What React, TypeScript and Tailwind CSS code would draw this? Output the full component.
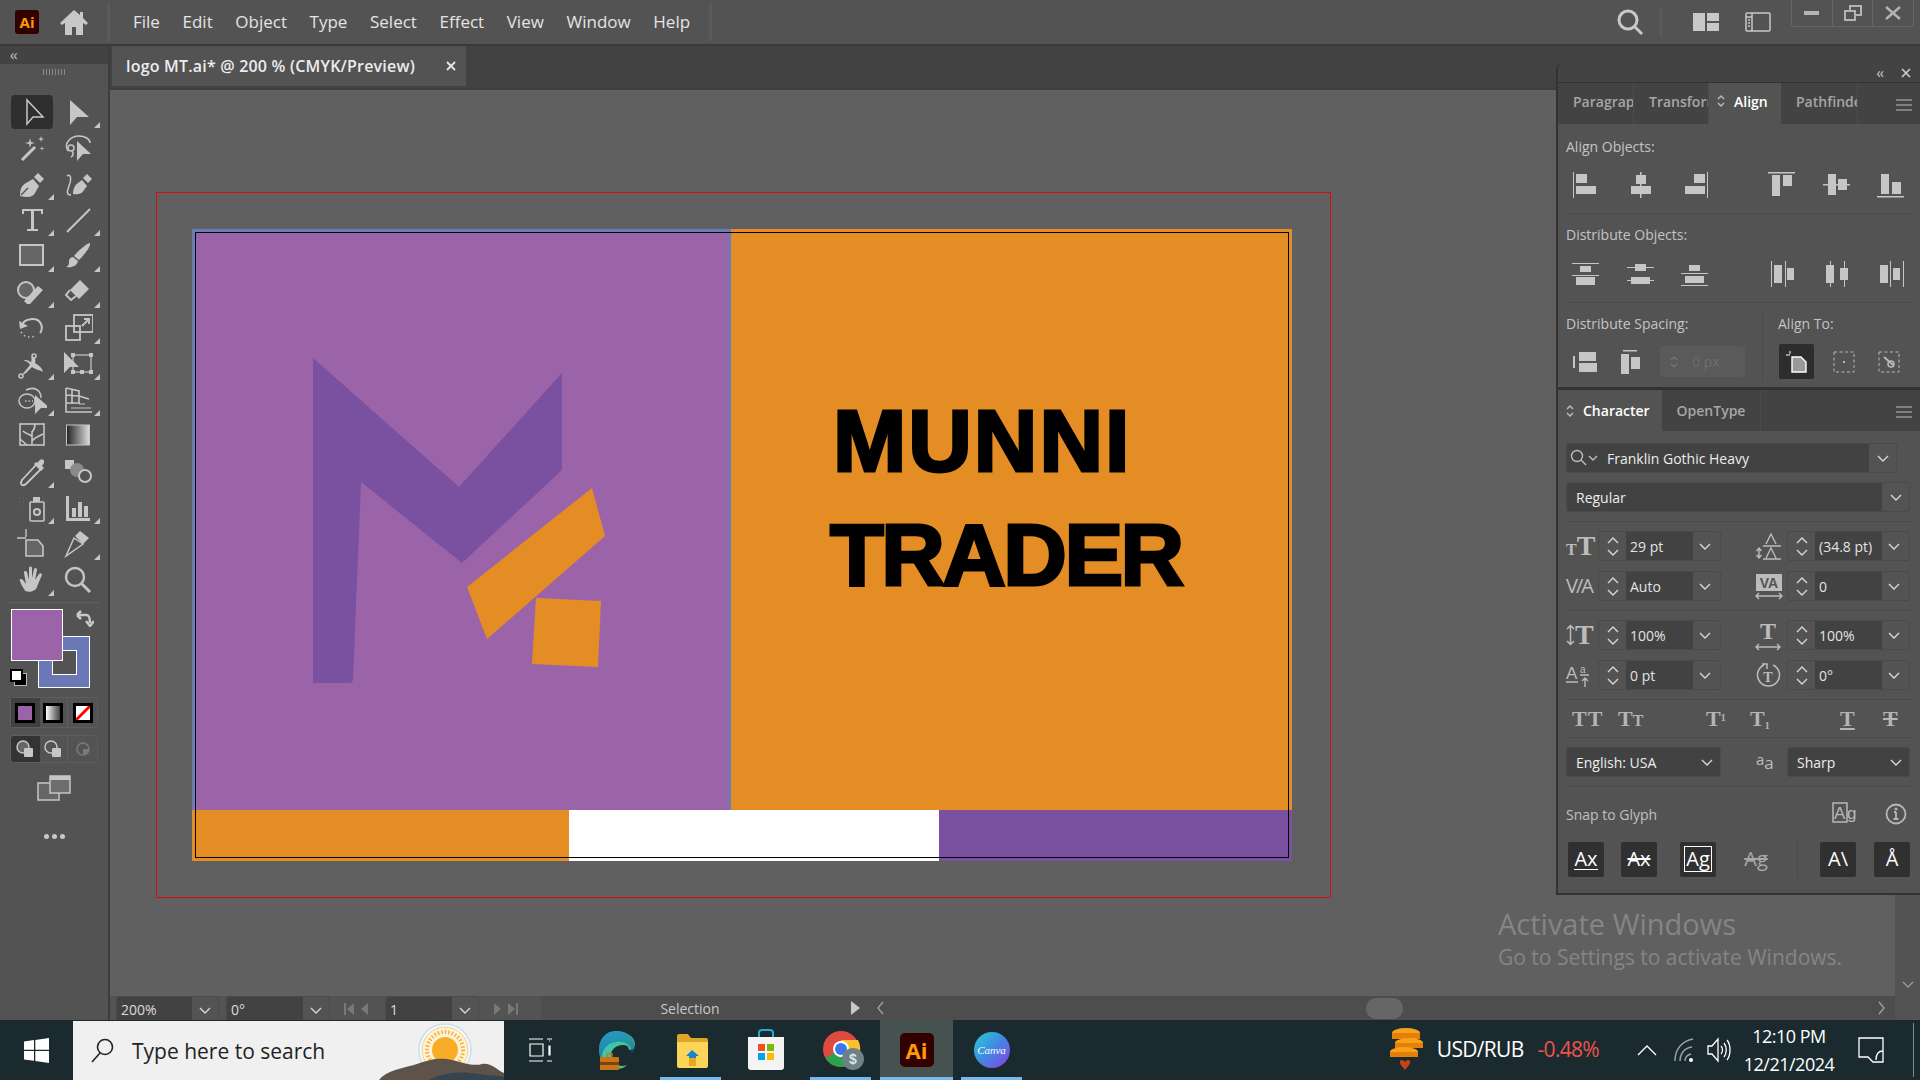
import React from 'react';

const C = '#c6c6c6';

const Ico = ({ s = 30, children, fill = 'none', sw = 1.5, className = '' }: { s?: number; children: React.ReactNode; fill?: string; sw?: number; className?: string }) => (
  <svg width={s} height={s} viewBox={`0 0 ${s} ${s}`} fill={fill} stroke={fill === 'none' ? C : 'none'} strokeWidth={sw} className={className}>
    {children}
  </svg>
);

const R = ({ x, y, w, h }: { x: number; y: number; w: number; h: number }) => <rect x={x} y={y} width={w} height={h} fill={C} stroke="none" />;

const Chev = ({ up = false, c = '#d8d8d8' }: { up?: boolean; c?: string }) => (
  <svg width="12" height="7" viewBox="0 0 12 7" fill="none" stroke={c} strokeWidth="1.4">
    <path d={up ? 'M1 6l5-5 5 5' : 'M1 1l5 5 5-5'} />
  </svg>
);

const UpDown = ({ c = '#b8b8b8' }: { c?: string }) => (
  <svg width="8" height="14" viewBox="0 0 8 14" fill="none" stroke={c} strokeWidth="1.5">
    <path d="M1 5l3-3 3 3M1 9l3 3 3-3" />
  </svg>
);

const Burger = () => (
  <svg width="16" height="12" viewBox="0 0 16 12" stroke="#bdbdbd" strokeWidth="1.2">
    <path d="M0 1h16M0 6h16M0 11h16" />
  </svg>
);

const tools: { icon: React.ReactNode; fly?: boolean; active?: boolean }[] = [
  { active: true, icon: <Ico><path d="M10 3v24l6-7h10z" /></Ico> },
  { fly: true, icon: <Ico fill={C}><path d="M7 3v25l7-8h12z" /></Ico> },
  { icon: <Ico><path d="M5 27L18 14" strokeWidth="3" /><path d="M13 5l1 4 4 1-4 1-1 4-1-4-4-1 4-1zM24 3l.7 2.3 2.3.7-2.3.7-.7 2.3-.7-2.3-2.3-.7 2.3-.7zM25 13l.5 2 2 .5-2 .5-.5 2-.5-2-2-.5 2-.5z" fill={C} stroke="none" /></Ico> },
  { icon: <Ico><path d="M5 18C0 10 8 3 16 3c6 0 11 3 11 7" /><circle cx="8" cy="15" r="3" /><path d="M9 18c2 3 1 5-1 6" /><path d="M14 8v20l6-7h8z" fill={C} stroke="none" /></Ico> },
  { fly: true, icon: <Ico><path d="M3 26c0-6 2-10 6-12l7-4 6 7-4 7c-2 4-7 5-15 3z" fill={C} stroke="none" /><path d="M17 8l4-4 6 6-4 4z" fill={C} stroke="none" /><path d="M4 26l7-7" stroke="#535353" /></Ico> },
  { icon: <Ico><path d="M4 7c5-3 4 5 2 10s-3 9 2 9" /><path d="M10 25c0-5 2-9 5-11l4-3 5 6-3 4c-2 4-6 5-11 4z" fill={C} stroke="none" /><path d="M20 9l4-4 5 5-4 4z" fill={C} stroke="none" /></Ico> },
  { fly: true, icon: <Ico fill={C}><path d="M5 4h21v5h-2V6H17v18h4v2H10v-2h4V6H7v3H5z" /></Ico> },
  { fly: true, icon: <Ico><path d="M4 27L27 4" strokeWidth="2" /></Ico> },
  { fly: true, icon: <Ico sw={2}><rect x="3" y="4" width="23" height="20" fill="#666" /></Ico> },
  { fly: true, icon: <Ico fill={C}><path d="M27 2c1 4-6 12-11 17l-5-4C16 9 23 3 27 2zM10 16l5 4c-1 5-6 7-12 6 3-1 3-4 3-6s2-4 4-4z" /></Ico> },
  { fly: true, icon: <Ico><circle cx="9" cy="13" r="8" fill="#666" strokeWidth="2" /><path d="M10 27l-3-3 14-15 5 4-13 14z" fill={C} stroke="none" /></Ico> },
  { fly: true, icon: <Ico><path d="M17 3l9 9-10 10-9-9z" fill={C} stroke="none" /><path d="M7 13l-4 5 5 5 5-4" strokeWidth="2" /></Ico> },
  { icon: <Ico><path d="M5 12C7 6 20 3 24 11c2 4 0 8-1 9" strokeWidth="2" /><path d="M2 8l1 8 8-3z" fill={C} stroke="none" /><path d="M4 19l2 3 4 2h4l5-1" strokeDasharray="1.5 3" /></Ico> },
  { fly: true, icon: <Ico sw={1.8}><rect x="11" y="2" width="19" height="17" /><rect x="3" y="13" width="14" height="14" /><path d="M19 13l6-6M21 6h5v5" /></Ico> },
  { fly: true, icon: <Ico><path d="M4 27l5-3 6-6c4 3 8 3 11 5-1-5-5-7-8-9 1-3 0-6-3-7-1 2 0 4-1 6-3-2-6-3-7-1 3 0 5 2 6 4z" fill={C} stroke="none" /><circle cx="4" cy="27" r="2" /><circle cx="17" cy="7" r="2" /></Ico> },
  { fly: true, icon: <Ico><path d="M1 3v21l6-6h9z" fill={C} stroke="none" /><rect x="10" y="6" width="18" height="17" strokeWidth="1.2" /><R x={8} y={4} w={4} h={4} /><R x={26} y={4} w={4} h={4} /><R x={26} y={21} w={4} h={4} /><R x={17} y={21} w={4} h={4} /><R x={8} y={21} w={4} h={4} /></Ico> },
  { fly: true, icon: <Ico><ellipse cx="10" cy="16" rx="8" ry="7" /><path d="M9 5c8-4 15 0 15 8" /><path d="M8 16h8" strokeDasharray="1.5 2" /><path d="M18 10v19l6-6h9z" fill={C} stroke="none" /></Ico> },
  { fly: true, icon: <Ico sw={1.2}><path d="M3 3v24h26M3 3l13 3v13M3 10l13 1 10 3M3 18h13M9 5v14" strokeWidth="1.6" /><path d="M16 19h6M16 23h12M8 23h8" /></Ico> },
  { icon: <Ico sw={1.6}><rect x="3" y="3" width="24" height="21" /><path d="M15 24V10M15 15c-3-2-6-2-9-5M15 20c3-4 6-4 11-7M15 11c2-2 3-4 3-8M3 18l7 6" /></Ico> },
  { icon: (
    <svg width="30" height="30" viewBox="0 0 30 30">
      <defs>
        <linearGradient id="gt" x1="0" x2="1">
          <stop offset="0" stopColor="#222" />
          <stop offset="1" stopColor="#ddd" />
        </linearGradient>
      </defs>
      <rect x="3.5" y="4" width="23" height="20" fill="url(#gt)" stroke={C} />
    </svg>
  ) },
  { fly: true, icon: <Ico><path d="M19 8l-14 15c-1 2-2 4 0 5s3 0 5-2L24 12" strokeWidth="1.8" /><path d="M17 7l7 7 3-3-2-2 2-3c1-3-2-5-4-3l-3 3-1-1z" fill={C} stroke="none" /></Ico> },
  { icon: <Ico sw={2}><rect x="2" y="3" width="9" height="9" fill={C} stroke="none" /><circle cx="14" cy="13" r="7" fill="#8a8a8a" stroke="none" /><circle cx="22" cy="19" r="6" fill="#535353" /></Ico> },
  { fly: true, icon: <Ico><path d="M2 5h.1M6 5h.1M10 5h.1M2 9h.1M6 9h.1M2 13h.1" strokeWidth="2" /><rect x="13" y="9" width="14" height="19" rx="1" strokeWidth="1.6" /><circle cx="20" cy="19" r="3" strokeWidth="2" /><R x={16} y={4} w={7} h={5} /></Ico> },
  { fly: true, icon: <Ico fill={C}><path d="M3 3h3v22h21v3H3z" /><path d="M9 15h4v9H9zM15 9h4v15h-4zM21 13h4v11h-4z" /></Ico> },
  { icon: <Ico><path d="M0 9h9M9 0v8" strokeWidth="1.4" /><path d="M9 11h12l5 6v10H9z" fill="#666" strokeWidth="1.6" /></Ico> },
  { fly: true, icon: <Ico><path d="M3 27l8-18 9 6z" strokeWidth="1.5" /><path d="M12 7l5-5 9 7-6 6z" fill={C} stroke="none" /></Ico> },
  { fly: true, icon: <Ico fill={C}><path d="M9 27c-2-3-5-7-6-11-1-2 1-3 3-1l3 4-2-11c-1-2 2-3 3-1l2 8V3c0-2 3-2 3 0v10l2-9c1-2 3-1 3 1l-2 10 4-6c2-2 3 0 3 1-2 4-4 9-5 12-1 4-8 6-11 4z" /></Ico> },
  { icon: <Ico sw={2.4}><circle cx="12" cy="12" r="9" /><path d="M19 19l8 8" strokeWidth="3" /></Ico> },
];

const menus = ['File', 'Edit', 'Object', 'Type', 'Select', 'Effect', 'View', 'Window', 'Help'];

const MenuBar = () => (
  <div className="flex h-[46px] items-center border-b-2 border-[#3a3a3a] bg-[#535353]">
    <div className="ml-[15px] flex h-[24px] w-[24px] items-center justify-center rounded-[3px] bg-[#330000] text-[15px] font-bold text-[#ff9a00]">Ai</div>
    <svg className="ml-[20px]" width="30" height="28" viewBox="0 0 30 28" fill="#c8c8c8">
      <path d="M15 2L1 15l2 2 3-2v12h7v-8h4v8h7V15l3 2 2-2-5-5V4h-3v3z" />
    </svg>
    <div className="ml-[18px] h-[38px] w-[3px] bg-[#5b5b5b]" />
    <div className="ml-[23px] flex gap-[22.6px] text-[17px] text-[#e4e4e4]">
      {menus.map((m) => (
        <span key={m}>{m}</span>
      ))}
    </div>
    <div className="ml-[19px] h-[38px] w-[3px] bg-[#5b5b5b]" />
    <div className="flex-1" />
    <svg width="28" height="28" viewBox="0 0 28 28" fill="none" stroke="#c8c8c8" strokeWidth="3">
      <circle cx="12" cy="12" r="9" />
      <path d="M18 18l8 8" />
    </svg>
    <div className="ml-[16px] h-[30px] w-[2px] bg-[#5b5b5b]" />
    <svg className="ml-[31px]" width="26" height="18" viewBox="0 0 26 18" fill="#c8c8c8">
      <path d="M0 0h12v18H0zM14 0h12v8H14zM14 10h12v8H14z" />
    </svg>
    <svg className="ml-[26px]" width="26" height="20" viewBox="0 0 26 20" fill="none" stroke="#c8c8c8" strokeWidth="1.5">
      <rect x="1" y="1" width="24" height="18" rx="1" />
      <path d="M7 1v18M1 5h6" />
      <path d="M3 8h2M3 11h2M3 14h2" />
    </svg>
    <div className="mb-[18px] ml-[20px] mr-[6px] flex h-[27px] w-[123px] items-center rounded-b-[3px] border border-t-0 border-[#666]">
      <div className="flex h-full flex-1 items-center justify-center border-r border-[#666]">
        <div className="h-[4px] w-[15px] bg-[#b4b4b4]" />
      </div>
      <div className="flex h-full flex-1 items-center justify-center border-r border-[#666]">
        <svg width="18" height="16" viewBox="0 0 18 16" fill="none" stroke="#b4b4b4" strokeWidth="2">
          <rect x="1" y="6" width="10" height="9" />
          <path d="M6 5V1h11v9h-5" />
        </svg>
      </div>
      <div className="flex h-full flex-1 items-center justify-center">
        <svg width="16" height="14" viewBox="0 0 16 14" fill="none" stroke="#b4b4b4" strokeWidth="2.4">
          <path d="M1 1l14 12M15 1L1 13" />
        </svg>
      </div>
    </div>
  </div>
);

const Toolbar = () => (
  <div className="flex w-[110px] shrink-0 flex-col border-r-2 border-[#3d3d3d] bg-[#535353]">
    <div className="flex h-[18px] items-center bg-[#434343] pl-[10px] text-[14px] leading-none tracking-[-1px] text-[#c8c8c8]">‹‹</div>
    <div className="flex h-[30px] justify-center pt-[5px]">
      <div className="h-[6px] w-[22px] bg-[repeating-linear-gradient(90deg,#8a8a8a_0_1px,transparent_1px_3px)]" />
    </div>
    <div className="grid grid-cols-[46px_46px] pl-[9px]">
      {tools.map((t, i) => (
        <div key={i} className="relative flex h-[36px] items-center justify-center">
          {t.active && <div className="absolute inset-x-[2px] inset-y-[1px] rounded-[4px] bg-[#2f2f2f]" />}
          <div className="relative flex">{t.icon}</div>
          {t.fly && <div className="absolute bottom-[2px] right-[1px] h-0 w-0 border-b-[6px] border-l-[6px] border-b-[#c6c6c6] border-l-transparent" />}
        </div>
      ))}
    </div>
    <div className="mx-[9px] mt-[4px] h-px bg-[#616161]" />
    <div className="relative h-[94px] shrink-0">
      <div className="absolute left-[38px] top-[33px] flex h-[52px] w-[52px] items-center justify-center border border-white bg-[#6a78b5]">
        <div className="h-[25px] w-[25px] border border-white bg-[#535353]" />
      </div>
      <div className="absolute left-[11px] top-[6px] h-[52px] w-[52px] border border-white bg-[#9b63a8]" />
      <svg className="absolute left-[76px] top-[6px]" width="18" height="18" viewBox="0 0 18 18" fill="none" stroke="#c8c8c8" strokeWidth="2.5">
        <path d="M2 6h8c3 0 4 2 4 8M1 6l4-4M1 6l4 4M10 12l4 5 4-5" />
      </svg>
      <div className="absolute left-[14px] top-[70px] h-[13px] w-[13px] border border-[#bbb] bg-black" />
      <div className="absolute left-[10px] top-[66px] h-[13px] w-[13px] border-2 border-black bg-white" />
    </div>
    <div className="mx-[10px] grid h-[31px] grid-cols-3 rounded-[3px] border border-[#5e5e5e]">
      <div className="flex items-center justify-center bg-[#404040]">
        <div className="h-[20px] w-[20px] border-[3px] border-black bg-[#9b63a8]" />
      </div>
      <div className="flex items-center justify-center border-r border-[#5e5e5e]">
        <div className="h-[20px] w-[20px] border-[3px] border-black bg-gradient-to-r from-white to-[#444]" />
      </div>
      <div className="flex items-center justify-center">
        <svg width="20" height="20" viewBox="0 0 20 20">
          <rect width="20" height="20" fill="#000" />
          <rect x="3" y="3" width="14" height="14" fill="#fff" />
          <path d="M3 15L15 3h2v2L5 17H3z" fill="#f00" />
        </svg>
      </div>
    </div>
    <div className="mx-[10px] mt-[7px] grid h-[28px] grid-cols-3 rounded-[3px] border border-[#5e5e5e]">
      <div className="flex items-center justify-center rounded-l-[3px] bg-[#333]">
        <svg width="18" height="18" viewBox="0 0 18 18">
          <circle cx="7" cy="7" r="6" fill="#666" stroke={C} strokeWidth="1.5" />
          <rect x="8" y="8" width="9" height="9" rx="1" fill={C} />
        </svg>
      </div>
      <div className="flex items-center justify-center border-r border-[#5e5e5e]">
        <svg width="18" height="18" viewBox="0 0 18 18">
          <circle cx="7" cy="7" r="6" fill="#535353" stroke={C} strokeWidth="1.5" />
          <rect x="8" y="8" width="9" height="9" rx="1" fill={C} />
        </svg>
      </div>
      <div className="flex items-center justify-center">
        <svg width="14" height="14" viewBox="0 0 14 14">
          <circle cx="7" cy="7" r="6" fill="none" stroke="#7a7a7a" strokeWidth="1.5" />
          <path d="M7 7h6a6 6 0 0 1-6 6z" fill="#7a7a7a" />
        </svg>
      </div>
    </div>
    <div className="flex justify-center pt-[12px]">
      <svg width="34" height="26" viewBox="0 0 34 26">
        <rect x="1" y="8" width="21" height="17" fill="#666" stroke={C} strokeWidth="1.5" />
        <rect x="13" y="1" width="20" height="17" fill="#6e6e6e" stroke={C} strokeWidth="1.5" />
        <rect x="13" y="1" width="20" height="4" fill={C} />
      </svg>
    </div>
    <div className="flex justify-center gap-[3px] pt-[33px]">
      <div className="h-[5px] w-[5px] rounded-full bg-[#c8c8c8]" />
      <div className="h-[5px] w-[5px] rounded-full bg-[#c8c8c8]" />
      <div className="h-[5px] w-[5px] rounded-full bg-[#c8c8c8]" />
    </div>
  </div>
);

const Artboard = () => (
  <div className="ml-[46px] mt-[102px] h-[706px] w-[1175px] shrink-0 border border-[#d40f0f] pl-[35px] pt-[36px]">
    <div className="relative flex h-[632px] w-[1100px] flex-col">
      <div className="flex h-[581px]">
        <div className="h-full w-[539px] border-x-[3px] border-t-[3px] border-[#6c7ab6] bg-[#9b63a8]">
          <svg width="533" height="578" viewBox="195 232 533 578" fill="none">
            <path d="M313 358L459 487L562 373V470L462 563L361 482L353 679Q353 683 349 683H313Z" fill="#7a50a0" />
            <path d="M592 488L605 536L487 639L467 587Z" fill="#e58d25" />
            <path d="M536 598L601 601L598 667L532 664Z" fill="#e58d25" />
          </svg>
        </div>
        <div className="flex flex-1 flex-col gap-[24px] bg-[#e58d25] pl-[102px] pt-[167px] font-['Liberation_Sans',sans-serif] text-[88px] font-bold leading-[90px] text-black [-webkit-text-stroke:3px_black]">
          <div className="tracking-[2px]">MUNNI</div>
          <div className="-ml-[3px] tracking-[-2.5px]">TRADER</div>
        </div>
      </div>
      <div className="flex h-[51px]">
        <div className="w-[377px] bg-[#e58d25]" />
        <div className="w-[370px] bg-white" />
        <div className="flex-1 bg-[#7a50a0]" />
      </div>
      <div className="pointer-events-none absolute inset-x-[3px] bottom-[3px] top-[3px] border border-black" />
    </div>
  </div>
);

const Label = ({ children }: { children: React.ReactNode }) => <div className="h-[20px] text-[14px] leading-[20px] text-[#c4c4c4]">{children}</div>;
const Sep = ({ className = '' }: { className?: string }) => <div className={`mx-[8px] h-px bg-[#4a4a4a] ${className}`} />;

const Ic = ({ children }: { children: React.ReactNode }) => (
  <svg width="28" height="28" viewBox="0 0 28 28" className="shrink-0">
    {children}
  </svg>
);

const alignObjects = [
  <Ic key="1"><R x={1} y={1} w={1} h={26} /><R x={4} y={3} w={11} h={9} /><R x={4} y={15} w={20} h={8} /></Ic>,
  <Ic key="2"><R x={13} y={1} w={1.5} h={26} /><R x={9} y={4} w={10} h={9} /><R x={4} y={15} w={20} h={8} /></Ic>,
  <Ic key="3"><R x={26} y={1} w={1} h={26} /><R x={13} y={3} w={11} h={9} /><R x={4} y={15} w={20} h={8} /></Ic>,
  <Ic key="4"><R x={0} y={1} w={27} h={1.5} /><R x={4} y={4} w={8} h={21} /><R x={15} y={4} w={9} h={11} /></Ic>,
  <Ic key="5"><R x={0} y={13} w={27} h={1.5} /><R x={5} y={3} w={8} h={21} /><R x={15} y={8} w={9} h={11} /></Ic>,
  <Ic key="6"><R x={0} y={25} w={27} h={1.5} /><R x={4} y={3} w={8} h={20} /><R x={15} y={11} w={9} h={12} /></Ic>,
];
const distObjects = [
  <Ic key="1"><R x={0} y={3} w={27} h={1} /><R x={0} y={15} w={27} h={1} /><R x={8} y={6} w={11} h={6} /><R x={4} y={17} w={19} h={8} /></Ic>,
  <Ic key="2"><R x={0} y={7} w={27} h={1} /><R x={0} y={20} w={27} h={1} /><R x={8} y={4} w={11} h={7} /><R x={4} y={17} w={19} h={7} /></Ic>,
  <Ic key="3"><R x={0} y={13} w={27} h={1} /><R x={0} y={25} w={27} h={1} /><R x={8} y={5} w={11} h={6} /><R x={4} y={16} w={19} h={7} /></Ic>,
  <Ic key="4"><R x={3} y={1} w={1} h={26} /><R x={17} y={1} w={1} h={26} /><R x={6} y={5} w={8} h={18} /><R x={19} y={8} w={7} h={12} /></Ic>,
  <Ic key="5"><R x={7} y={1} w={1} h={26} /><R x={21} y={1} w={1} h={26} /><R x={3} y={5} w={8} h={18} /><R x={17} y={8} w={8} h={12} /></Ic>,
  <Ic key="6"><R x={13} y={1} w={1} h={26} /><R x={26} y={1} w={1} h={26} /><R x={3} y={5} w={8} h={18} /><R x={16} y={8} w={7} h={12} /></Ic>,
];

const PanelTab = ({ label, active, w, arrows }: { label: string; active?: boolean; w: string; arrows?: boolean }) => (
  <div className={`flex h-full items-center overflow-hidden whitespace-nowrap pb-[5px] text-[14px] font-semibold ${w} ${active ? 'bg-[#535353] text-white' : 'border-r border-[#4c4c4c] text-[#a6a6a6]'}`}>
    {arrows && <span className="ml-[8px] mr-[9px] flex shrink-0"><UpDown /></span>}
    {!arrows && <span className="ml-[15px]" />}
    {label}
  </div>
);

const Spin = ({ value }: { value: string }) => (
  <div className="flex h-[30px] w-[123px] shrink-0 rounded-[3px] border border-[#4a4a4a]">
    <div className="flex w-[27px] flex-col items-center justify-center gap-[5px]">
      <Chev up />
      <Chev />
    </div>
    <div className="flex flex-1 items-center whitespace-nowrap bg-[#424242] pl-[4px] text-[14px] text-[#e2e2e2]">{value}</div>
    <div className="flex w-[27px] items-center justify-center pr-[3px]">
      <Chev />
    </div>
  </div>
);

const SerifT = ({ size, className = '' }: { size: number; className?: string }) => (
  <span className={`font-['Liberation_Serif',serif] font-bold leading-none text-[#bcbcbc] ${className}`} style={{ fontSize: size }}>T</span>
);

const CharRow = ({ a, av, b, bv }: { a: React.ReactNode; av: string; b: React.ReactNode; bv: string }) => (
  <div className="flex h-[30px] items-center pl-[8px]">
    <div className="flex h-[30px] w-[32px] items-center justify-start">{a}</div>
    <Spin value={av} />
    <div className="ml-[34px] flex h-[30px] w-[32px] items-center justify-start">{b}</div>
    <Spin value={bv} />
  </div>
);

const DarkBtn = ({ children }: { children: React.ReactNode }) => (
  <div className="flex h-[35px] w-[36px] shrink-0 items-center justify-center rounded-[2px] bg-[#303030] text-[20px] leading-none text-white">{children}</div>
);

const Panels = () => (
  <div className="absolute right-0 top-[18px] flex h-[831px] w-[362px] flex-col rounded-tl-[6px] border-b-2 border-[#333] bg-[#535353] font-['Open_Sans',sans-serif] shadow-[-2px_0_0_#333]">
    <div className="flex h-[19px] shrink-0 items-center justify-end gap-[18px] rounded-tl-[6px] border-b border-[#333] bg-[#434343] pr-[9px] text-[#d0d0d0]">
      <span className="text-[14px] leading-none tracking-[-1px]">‹‹</span>
      <svg width="10" height="10" viewBox="0 0 10 10" stroke="#d0d0d0" strokeWidth="1.6"><path d="M1 1l8 8M9 1L1 9" /></svg>
    </div>
    <div className="flex h-[41px] shrink-0 items-center bg-[#434343]">
      <PanelTab label="Paragrap" w="w-[76px]" />
      <PanelTab label="Transform" w="w-[75px]" />
      <PanelTab label="Align" w="w-[72px]" active arrows />
      <PanelTab label="Pathfinder" w="w-[77px]" />
      <div className="ml-auto mr-[8px] pt-[2px]"><Burger /></div>
    </div>
    <div className="h-[266px] shrink-0 border-b-[3px] border-[#333]">
      <div className="pl-[8px] pt-[13px]"><Label>Align Objects:</Label></div>
      <div className="mt-[14px] flex pl-[14px]">
        <div className="flex gap-[26.5px]">{alignObjects.slice(0, 3)}</div>
        <div className="ml-[59px] flex gap-[26.5px]">{alignObjects.slice(3)}</div>
      </div>
      <Sep className="mt-[14px]" />
      <div className="pl-[8px] pt-[11px]"><Label>Distribute Objects:</Label></div>
      <div className="mt-[15px] flex pl-[14px]">
        <div className="flex gap-[26.5px]">{distObjects.slice(0, 3)}</div>
        <div className="ml-[59px] flex gap-[26.5px]">{distObjects.slice(3)}</div>
      </div>
      <Sep className="mt-[14px]" />
      <div className="flex">
        <div className="w-[204px] pl-[8px] pt-[11px]">
          <Label>Distribute Spacing:</Label>
          <div className="mt-[12px] flex items-center pl-[6px]">
            <Ic><R x={1} y={8} w={2} h={12} /><R x={7} y={4} w={17} h={9} /><R x={7} y={15} w={18} h={9} /></Ic>
            <div className="ml-[18px]"><Ic><R x={5} y={2} w={14} h={1.5} /><R x={3} y={6} w={8} h={20} /><R x={13} y={9} w={9} h={12} /></Ic></div>
            <div className="ml-[14px] flex h-[31px] w-[85px] items-center rounded-[3px] bg-[#5a5a5a] text-[14px] text-[#6f6f6f]">
              <div className="flex w-[28px] justify-center"><UpDown c="#727272" /></div>
              <span className="pl-[4px]">0 px</span>
            </div>
          </div>
        </div>
        <div className="mt-[8px] h-[70px] w-px bg-[#4a4a4a]" />
        <div className="pl-[15px] pt-[11px]">
          <Label>Align To:</Label>
          <div className="mt-[10px] flex items-center pl-[1px]">
            <div className="flex h-[35px] w-[35px] items-center justify-center rounded-[2px] bg-[#2d2d2d]">
              <svg width="22" height="22" viewBox="0 0 22 22" fill="none">
                <path d="M0 4h4M4 0v3" stroke="#fff" />
                <path d="M6 6h9l5 5v10H6z" fill="#9a9a9a" stroke="#fff" strokeWidth="1.4" />
              </svg>
            </div>
            <svg width="22" height="22" viewBox="0 0 22 22" stroke="#b8b8b8" strokeDasharray="3 2.5" fill="none" className="ml-[19px]"><rect x="1" y="1" width="20" height="20" /><path d="M10 11h2" strokeDasharray="0" strokeWidth="2" /></svg>
            <svg width="22" height="22" viewBox="0 0 22 22" stroke="#b8b8b8" strokeDasharray="3 2.5" fill="none" className="ml-[23px]"><rect x="1" y="1" width="20" height="20" /><path d="M6 6l9 8" strokeDasharray="0" strokeWidth="2" /><circle cx="13" cy="13" r="3" strokeDasharray="0" strokeWidth="1.5" /></svg>
          </div>
        </div>
      </div>
    </div>
    <div className="flex h-[41px] shrink-0 items-center bg-[#434343]">
      <div className="flex h-full w-[104px] items-center bg-[#535353] pl-[8px] text-[14px] font-semibold text-white">
        <span className="mr-[9px] flex"><UpDown /></span>Character
      </div>
      <div className="flex h-full w-[99px] items-center justify-center border-r border-[#4c4c4c] text-[14px] font-semibold text-[#a6a6a6]">OpenType</div>
      <div className="ml-auto mr-[8px] pt-[2px]"><Burger /></div>
    </div>
    <div className="ml-[8px] mt-[12px] flex h-[30px] w-[331px] shrink-0 items-center rounded-[3px] border border-[#4a4a4a] bg-[#424242] text-[14px] text-[#ececec]">
      <svg className="ml-[3px]" width="28" height="18" viewBox="0 0 28 18" fill="none" stroke="#bdbdbd" strokeWidth="1.4">
        <circle cx="7" cy="7" r="5.5" />
        <path d="M11 11l5 5M19 7l4 4 4-4" />
      </svg>
      <span className="ml-[9px]">Franklin Gothic Heavy</span>
      <div className="ml-auto flex h-full w-[27px] items-center justify-center bg-[#535353]"><Chev /></div>
    </div>
    <div className="ml-[8px] mt-[9px] flex h-[30px] w-[344px] shrink-0 items-center rounded-[3px] border border-[#4a4a4a] bg-[#424242] pl-[9px] text-[14px] text-[#ececec]">
      Regular
      <div className="ml-auto flex h-full w-[27px] items-center justify-center bg-[#535353]"><Chev /></div>
    </div>
    <Sep className="mt-[9px]" />
    <div className="mt-[9px]">
      <CharRow
        a={<div className="flex items-baseline"><SerifT size={16} /><SerifT size={28} /></div>}
        av="29 pt"
        b={<svg width="28" height="28" viewBox="0 0 28 28" fill="none" stroke="#bcbcbc" strokeWidth="1.4"><path d="M11 12l5-10 5 10M8 14h18M11 26l5-10 5 10M8 27h18M4 16v10M1.5 19l2.5-3 2.5 3M1.5 23l2.5 3 2.5-3" /></svg>}
        bv="(34.8 pt)"
      />
    </div>
    <div className="mt-[10px]">
      <CharRow
        a={<span className="whitespace-nowrap text-[20px] leading-none tracking-[-2px] text-[#bcbcbc]">V/A</span>}
        av="Auto"
        b={<svg width="28" height="28" viewBox="0 0 28 28"><rect x="1" y="2" width="26" height="17" fill="#bcbcbc" /><text x="14" y="16" textAnchor="middle" fontSize="14" fontWeight="700" fontFamily="Liberation Sans" fill="#535353">VA</text><path d="M1 24h26M4 21l-3 3 3 3M24 21l3 3-3 3" fill="none" stroke="#bcbcbc" strokeWidth="1.4" /></svg>}
        bv="0"
      />
    </div>
    <Sep className="mt-[9px]" />
    <div className="mt-[9px]">
      <CharRow
        a={<div className="flex items-center"><svg width="9" height="22" viewBox="0 0 9 22" fill="none" stroke="#bcbcbc" strokeWidth="1.5"><path d="M4.5 2v18M1 5l3.500-3.500L8 5M1 17l3.500 3.500L8 17" /></svg><SerifT size={28} /></div>}
        av="100%"
        b={<div className="flex flex-col items-center leading-none"><SerifT size={24} /><svg width="26" height="8" viewBox="0 0 26 8" fill="none" stroke="#bcbcbc" strokeWidth="1.4"><path d="M1 4h24M4 1L1 4l3 3M22 1l3 3-3 3" /></svg></div>}
        bv="100%"
      />
    </div>
    <div className="mt-[10px]">
      <CharRow
        a={<svg width="26" height="26" viewBox="0 0 26 26" fill="none" stroke="#bcbcbc" strokeWidth="1.4"><text x="0" y="17" fontSize="17" fill="#bcbcbc" stroke="none" fontFamily="Liberation Sans">A</text><text x="14" y="11" fontSize="10" fill="#bcbcbc" stroke="none" fontFamily="Liberation Sans">a</text><path d="M0 20h12M14 13h9M19 25v-8M16 19l3-3 3 3" /></svg>}
        av="0 pt"
        b={<svg width="26" height="26" viewBox="0 0 26 26" fill="none" stroke="#bcbcbc" strokeWidth="1.5"><path d="M18 3a11 11 0 1 1-9 0" /><path d="M7 2h5v5" /><text x="13" y="20" textAnchor="middle" fontSize="14" fontWeight="700" fontFamily="Liberation Serif" fill="#bcbcbc" stroke="none">T</text></svg>}
        bv="0°"
      />
    </div>
    <Sep className="mt-[9px]" />
    <div className="flex h-[37px] shrink-0 items-center pl-[14px] font-['Liberation_Serif',serif] font-bold text-[#b4b4b4]">
      <span className="w-[46px] text-[22px] tracking-[1px]">TT</span>
      <span className="w-[88px] text-[22px]">T<span className="text-[16px]">T</span></span>
      <span className="w-[44px] text-[22px]">T<sup className="text-[10px]">1</sup></span>
      <span className="w-[90px] text-[22px]">T<sub className="text-[10px]">1</sub></span>
      <span className="w-[43px] text-[22px] underline">T</span>
      <span className="text-[22px] line-through">T</span>
    </div>
    <Sep />
    <div className="mt-[9px] flex h-[30px] shrink-0 items-center pl-[8px] text-[14px] text-[#ececec]">
      <div className="flex h-full w-[155px] items-center rounded-[3px] border border-[#4a4a4a] bg-[#424242] pl-[9px]">
        English: USA
        <span className="ml-auto mr-[7px] flex"><Chev /></span>
      </div>
      <div className="ml-[35px] flex w-[31px] items-baseline leading-none text-[#bcbcbc]"><span className="-translate-y-[4px] text-[15px]">a</span><span className="text-[17px]">a</span></div>
      <div className="flex h-full w-[123px] items-center rounded-[3px] border border-[#4a4a4a] bg-[#424242] pl-[9px]">
        Sharp
        <span className="ml-auto mr-[7px] flex"><Chev /></span>
      </div>
    </div>
    <Sep className="mt-[9px]" />
    <div className="mt-[12px] flex h-[30px] shrink-0 items-center pl-[8px] text-[14px] text-[#c0c0c0]">
      Snap to Glyph
      <div className="ml-auto flex items-center gap-[27px] pr-[13px]">
        <svg width="26" height="24" viewBox="0 0 26 24" fill="none" stroke="#b8b8b8"><rect x="1" y="1" width="14" height="19" strokeWidth="1.5" /><text x="2" y="17" fontSize="17" fill="#b8b8b8" stroke="none" fontFamily="Liberation Sans">A</text><text x="15" y="17" fontSize="17" fill="#b8b8b8" stroke="none" fontFamily="Liberation Sans">g</text></svg>
        <svg width="22" height="22" viewBox="0 0 22 22" fill="none" stroke="#b8b8b8" strokeWidth="1.8"><circle cx="11" cy="11" r="9.500" /><path d="M11 9v7M8.500 16h5M9 9h2" /><circle cx="11" cy="6" r="0.6" /></svg>
      </div>
    </div>
    <div className="mt-[11px] flex items-center pl-[10px]">
      <DarkBtn><span className="border-b border-white leading-[20px]">Ax</span></DarkBtn>
      <div className="ml-[17px]"><DarkBtn><span className="line-through">Ax</span></DarkBtn></div>
      <div className="ml-[23px]"><DarkBtn><span className="border border-white px-[1px] leading-[24px]">Ag</span></DarkBtn></div>
      <div className="ml-[22px] w-[36px] text-center text-[20px] text-[#a8a8a8] line-through">Ag</div>
      <div className="ml-[23px] mr-[22px] h-[38px] w-px bg-[#4a4a4a]" />
      <DarkBtn>A\</DarkBtn>
      <div className="ml-[18px]"><DarkBtn>Å</DarkBtn></div>
    </div>
  </div>
);

const NavTri = ({ d }: { d: string }) => (
  <svg width="10" height="14" viewBox="0 0 10 14" fill="#787878">
    <path d={d} />
  </svg>
);

const StatusBar = () => (
  <div className="flex h-[24px] shrink-0 items-stretch overflow-hidden bg-[#535353] text-[14px] text-[#dcdcdc]">
    <div className="ml-[6px] flex w-[103px] overflow-hidden rounded-t-[3px] border-x border-t border-[#4a4a4a]">
      <div className="flex-1 bg-[#424242] pl-[4px] pt-[4px] leading-[18px]">200%</div>
      <div className="flex w-[26px] items-center justify-center pt-[3px]"><Chev /></div>
    </div>
    <div className="ml-[7px] flex w-[104px] overflow-hidden rounded-t-[3px] border-x border-t border-[#4a4a4a]">
      <div className="flex-1 bg-[#424242] pl-[4px] pt-[4px] leading-[18px]">0°</div>
      <div className="flex w-[26px] items-center justify-center pt-[3px]"><Chev /></div>
    </div>
    <div className="ml-[4px] flex w-[51px] items-center justify-center gap-[6px] pr-[6px] pt-[2px]">
      <NavTri d="M0 1h2v12H0zM10 1v12L3 7z" />
      <NavTri d="M8 1v12L1 7z" />
    </div>
    <div className="flex w-[94px] overflow-hidden rounded-t-[3px] border-x border-t border-[#4a4a4a]">
      <div className="flex-1 bg-[#424242] pl-[4px] pt-[4px] leading-[18px]">1</div>
      <div className="flex w-[26px] items-center justify-center pt-[3px]"><Chev /></div>
    </div>
    <div className="flex w-[62px] items-center justify-center gap-[6px] pr-[10px] pt-[2px]">
      <NavTri d="M2 1v12l7-6z" />
      <NavTri d="M0 1v12l7-6zM8 1h2v12H8z" />
    </div>
    <div className="flex w-[306px] items-center justify-center bg-[#4d4d4d] pr-[8px] text-[#c8c8c8]">Selection</div>
    <div className="flex w-[16px] items-center justify-center bg-[#4d4d4d]">
      <svg width="9" height="14" viewBox="0 0 9 14" fill="#c8c8c8"><path d="M0 0v14l9-7z" /></svg>
    </div>
    <div className="flex flex-1 items-center bg-[#4d4d4d] pl-[13px]">
      <svg width="8" height="14" viewBox="0 0 8 14" fill="none" stroke="#a0a0a0" strokeWidth="1.4"><path d="M7 1L2 7l5 6" /></svg>
      <div className="ml-[482px] h-[21px] w-[37px] rounded-[10px] bg-[#666]" />
      <svg className="ml-[475px]" width="8" height="14" viewBox="0 0 8 14" fill="none" stroke="#a0a0a0" strokeWidth="1.4"><path d="M1 1l5 6-5 6" /></svg>
    </div>
    <div className="w-[25px] bg-[#535353]" />
  </div>
);

const TaskIcon = ({ children, open, active, w = 'w-[75px]', bar = 'inset-x-[7px]' }: { children: React.ReactNode; open?: boolean; active?: boolean; w?: string; bar?: string }) => (
  <div className={`relative flex h-full shrink-0 items-center justify-center ${w} ${active ? 'bg-[#45524f]' : ''}`}>
    {children}
    {open && <div className={`absolute bottom-0 h-[3px] bg-[#76b9ed] ${bar}`} />}
  </div>
);

const Taskbar = () => (
  <div className="flex h-[60px] shrink-0 items-stretch bg-[#1a2a2e] font-['Open_Sans',sans-serif] text-white">
    <div className="flex w-[73px] items-center justify-center">
      <svg width="25" height="25" viewBox="0 0 25 25" fill="#fff"><path d="M0 3.500l10-1.400v9.700H0zM11.300 2L25 0v11.800H11.300zM0 13h10v9.800L0 21.400zM11.300 13H25v12l-13.700-2z" /></svg>
    </div>
    <div className="relative mt-[1px] flex w-[431px] items-center overflow-hidden bg-[#f0f0f0] text-[#222]">
      <svg className="ml-[17px]" width="24" height="26" viewBox="0 0 24 26" fill="none" stroke="#222" strokeWidth="1.6"><circle cx="15" cy="9" r="7.500" /><path d="M10 15L2 24" /></svg>
      <span className="ml-[18px] pt-[3px] text-[21px]">Type here to search</span>
      <svg className="absolute right-0 top-0" width="125" height="59" viewBox="0 0 125 59">
        <circle cx="66" cy="29" r="26" fill="#fff" stroke="#cfe3ee" strokeWidth="2" />
        <circle cx="66" cy="29" r="23" fill="#fdf3da" stroke="#f5c97a" />
        <circle cx="66" cy="29" r="18" fill="none" stroke="#f9b233" strokeWidth="4" strokeDasharray="1.500 2" />
        <circle cx="66" cy="29" r="13" fill="#f9ad26" />
        <path d="M0 59c8-10 25-12 38-16 12-4 18-6 30-5 12 2 25 8 35 5 8-2 14 5 22 9v7z" fill="#5d534a" />
        <path d="M50 59c10-6 30-10 50-6 10 2 18 1 25 3v3z" fill="#35444f" />
      </svg>
    </div>
    <div className="flex w-[74px] items-center justify-center">
      <svg width="24" height="24" viewBox="0 0 24 24" fill="none" stroke="#fff" strokeWidth="1.2"><path d="M0 1h14M0 23h14M1 6h13v12H1zM18 1h5M18 23h5M20 8h1v9h-1zM20 3h1" /></svg>
    </div>
    <TaskIcon>
      <svg width="38" height="40" viewBox="0 0 38 40">
        <defs>
          <linearGradient id="eg" x1="0" y1="0" x2="1" y2="1"><stop offset="0" stopColor="#2fc6e0" /><stop offset="1" stopColor="#52c94f" /></linearGradient>
          <linearGradient id="eb" x1="0" y1="0" x2="0" y2="1"><stop offset="0" stopColor="#1676c4" /><stop offset="1" stopColor="#0b4b8f" /></linearGradient>
        </defs>
        <path d="M19 1C8 1 2 10 2 20c0 11 8 19 17 19 4 0 8-1 11-4-8 3-16-2-16-10 0-6 6-10 12-10 5 0 6 3 6 5 5 0 6-3 6-6C38 7 29 1 19 1z" fill="url(#eg)" />
        <path d="M19 1C8 1 2 10 2 20c0 3 1 7 3 10C4 20 10 13 19 12c8-1 16 2 15 11 3-1 4-3 4-6C38 7 29 1 19 1z" fill="url(#eb)" opacity="0.55" />
        <rect x="3" y="27" width="19" height="13" rx="1" fill="#c8741a" />
        <rect x="3" y="32" width="19" height="3" fill="#7a4410" />
        <rect x="10" y="24" width="5" height="4" fill="none" stroke="#c8741a" strokeWidth="1.5" />
      </svg>
    </TaskIcon>
    <TaskIcon open>
      <svg width="33" height="36" viewBox="0 0 33 36" className="ml-[3px]">
        <path d="M1 4a2 2 0 0 1 2-2h9l3 4h15a2 2 0 0 1 2 2v4H1z" fill="#e0a528" />
        <path d="M1 10h31v24a2 2 0 0 1-2 2H3a2 2 0 0 1-2-2z" fill="#fbd45a" />
        <path d="M10 24l6-6 7 6h-3v9H13v-9z" fill="#1a83c9" />
        <path d="M13 34v-8h7v8z" fill="#e8a823" />
      </svg>
    </TaskIcon>
    <TaskIcon>
      <svg width="36" height="42" viewBox="0 0 36 42">
        <path d="M11 8V4a3 3 0 0 1 3-3h8a3 3 0 0 1 3 3v4" fill="none" stroke="#29a6dc" strokeWidth="2" />
        <path d="M0 8h36v30a3 3 0 0 1-3 3H3a3 3 0 0 1-3-3z" fill="#f4f4f4" />
        <rect x="10" y="15" width="7" height="7" fill="#f25022" />
        <rect x="19" y="15" width="7" height="7" fill="#7fba00" />
        <rect x="10" y="24" width="7" height="7" fill="#00a4ef" />
        <rect x="19" y="24" width="7" height="7" fill="#ffb900" />
      </svg>
    </TaskIcon>
    <TaskIcon open>
      <svg width="42" height="44" viewBox="0 0 42 44" className="ml-[4px]">
        <circle cx="19" cy="21" r="18" fill="#dd4b3e" />
        <path d="M19 21L3.500 30A18 18 0 0 0 25 38z" fill="#2ba24c" />
        <path d="M19 21l6 17A18 18 0 0 0 36 12H19z" fill="#fbc02d" />
        <circle cx="19" cy="21" r="8" fill="#fff" />
        <circle cx="19" cy="21" r="6" fill="#3b78e7" />
        <circle cx="31" cy="31" r="11" fill="#6f8087" />
        <text x="31" y="36" textAnchor="middle" fontSize="14" fontWeight="700" fontFamily="Liberation Sans" fill="#dfe6e8">$</text>
      </svg>
    </TaskIcon>
    <TaskIcon open active w="w-[73px] ml-[2px] mr-[8px]" bar="inset-x-0">
      <div className="flex h-[34px] w-[34px] items-center justify-center rounded-[5px] bg-[#330000] text-[22px] font-bold text-[#ff9a00]">Ai</div>
    </TaskIcon>
    <TaskIcon open w="w-[61px]" bar="inset-x-0">
      <div className="flex h-[36px] w-[36px] items-center justify-center rounded-full bg-gradient-to-br from-[#1fd0cf] via-[#3f86e0] to-[#7c2ae8] font-['Liberation_Serif',serif] text-[11px] italic text-white">Canva</div>
    </TaskIcon>
    <div className="flex-1" />
    <div className="flex w-[36px] items-center justify-center">
      <svg width="36" height="48" viewBox="0 0 36 48">
        <ellipse cx="17" cy="7" rx="14" ry="5" fill="#f6a21a" />
        <rect x="3" y="7" width="28" height="6" fill="#e57f07" />
        <ellipse cx="20" cy="17" rx="14" ry="5" fill="#f6a21a" />
        <rect x="6" y="17" width="28" height="5" fill="#e57f07" />
        <ellipse cx="15" cy="26" rx="14" ry="5" fill="#f6a21a" />
        <rect x="1" y="26" width="28" height="5" fill="#e57f07" />
        <path d="M11 35c1-2 4-1 5 1 1-2 4-3 5-1 1 3-3 6-5 9-2-3-6-6-5-9z" fill="#c8401a" />
      </svg>
    </div>
    <span className="ml-[12px] self-center text-[21px] tracking-[-0.7px]">USD/RUB</span>
    <span className="ml-[14px] self-center text-[21px] tracking-[-0.7px] text-[#ef5350]">-0.48%</span>
    <div className="ml-[38px] flex items-center">
      <svg width="20" height="12" viewBox="0 0 20 12" fill="none" stroke="#fff" strokeWidth="1.4"><path d="M1 11l9-9 9 9" /></svg>
    </div>
    <div className="ml-[17px] flex items-center">
      <svg width="20" height="26" viewBox="0 0 20 26" fill="none" stroke="#9aa3a5" strokeWidth="1.4"><path d="M1 24C1 12 8 4 19 2M6 24c0-7 4-13 12-14M11 24c0-3 2-6 6-7" /><circle cx="17" cy="23" r="2" fill="#fff" stroke="none" /></svg>
    </div>
    <div className="ml-[13px] flex items-center">
      <svg width="24" height="26" viewBox="0 0 24 26" fill="none" stroke="#fff" strokeWidth="1.3"><path d="M1 9h4l6-7v22l-6-7H1zM14 9c2 2 2 6 0 8M17 6c3 4 3 10 0 14M20 3c4 5 4 15 0 20" /></svg>
    </div>
    <div className="ml-[4px] flex w-[108px] flex-col items-center justify-center gap-[2px] text-[18px] leading-[26px] tracking-[-0.5px]">
      <span>12:10 PM</span>
      <span>12/21/2024</span>
    </div>
    <div className="ml-[6px] flex w-[64px] items-center pl-[9px]">
      <svg width="26" height="26" viewBox="0 0 26 26" fill="none" stroke="#fff" strokeWidth="1.3"><path d="M1 1h24v24l-10 0-5-5H1zM25 14c-5 0-7 3-7 9" /></svg>
    </div>
    <div className="my-[3px] w-px bg-[#7d8b90]" />
    <div className="w-[6px]" />
  </div>
);

export default function App() {
  return (
    <div className="flex h-[1080px] w-[1920px] flex-col overflow-hidden bg-[#535353] font-['Open_Sans',sans-serif]">
      <MenuBar />
      <div className="relative flex min-h-0 flex-1">
        <Toolbar />
        <div className="flex min-w-0 flex-1 flex-col">
          <div className="flex h-[42px] shrink-0 bg-[#424242] pl-[2px] pb-[2px]">
            <div className="flex w-[354px] items-center justify-between bg-[#535353] pl-[14px] pr-[10px] text-[16px] font-semibold tracking-[0.2px] text-[#ececec]">
              <span>logo MT.ai* @ 200 % (CMYK/Preview)</span>
              <svg width="10" height="10" viewBox="0 0 10 10" stroke="#e6e6e6" strokeWidth="1.8"><path d="M1 1l8 8M9 1L1 9" /></svg>
            </div>
          </div>
          <div className="flex min-h-0 flex-1 border-t-2 border-[#3f3f3f]">
            <div className="min-w-0 flex-1 bg-[#606060]">
              <Artboard />
            </div>
            <div className="flex w-[25px] shrink-0 items-end justify-center bg-[#535353] pb-[8px]">
              <Chev c="#9a9a9a" />
            </div>
          </div>
          <StatusBar />
        </div>
        <Panels />
        <div className="pointer-events-none absolute left-[1498px] top-[860px] text-[#858585]">
          <div className="text-[29px] leading-[36px]">Activate Windows</div>
          <div className="text-[21px] leading-[30px]">Go to Settings to activate Windows.</div>
        </div>
      </div>
      <Taskbar />
    </div>
  );
}
